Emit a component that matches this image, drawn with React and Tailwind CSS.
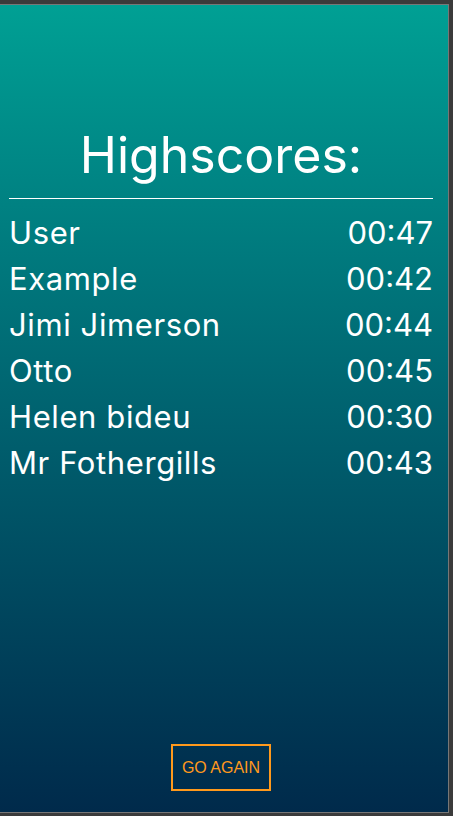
import React from 'react';

const scores = [
    { name: 'User', time: '00:47' },
    { name: 'Example', time: '00:42' },
    { name: 'Jimi Jimerson', time: '00:44' },
    { name: 'Otto', time: '00:45' },
    { name: 'Helen bideu', time: '00:30' },
    { name: 'Mr Fothergills', time: '00:43' },
];

export default function App() {
    return (
        <div className="h-[816px] w-[453px] bg-[#3b3b3b] pt-[4px] pr-[4px] pb-[3px]">
            <div className="flex h-full flex-col border-t border-r border-b border-[#777777] bg-gradient-to-b from-[#00a094] to-[#002a4b] font-['Inter','Open_Sans',sans-serif] text-white">
                <h1 className="mt-[120px] pr-[6px] text-center text-[50px] leading-[60px] font-normal">
                    Highscores:
                </h1>
                <div className="mt-[13px] mr-[15px] ml-[9px] h-px bg-white"></div>
                <ul className="mt-[11px] mr-[15px] ml-[9px]">
                    {scores.map((s) => (
                        <li key={s.name} className="flex justify-between text-[31px] leading-[46px]">
                            <span className="tracking-[0.6px]">{s.name}</span>
                            <span>{s.time}</span>
                        </li>
                    ))}
                </ul>
                <div className="flex-1"></div>
                <div className="mb-[21px] flex justify-center">
                    <button className="ml-[-6px] h-[47px] w-[100px] border-2 border-[#ff991c] font-['Liberation_Sans',Arial,sans-serif] text-[16px] text-[#ff991c]">
                        GO AGAIN
                    </button>
                </div>
            </div>
        </div>
    );
}
